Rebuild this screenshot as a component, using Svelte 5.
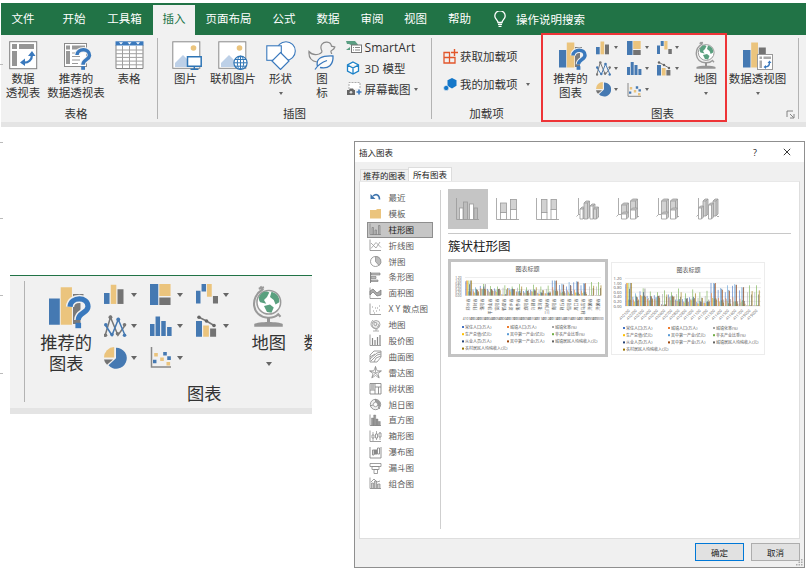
<script>
  const tabs = [
    ['文件', 44], ['开始', 58], ['工具箱', 43], ['插入', 42], ['页面布局', 67],
    ['公式', 44], ['数据', 44], ['审阅', 44], ['视图', 43], ['帮助', 45]
  ];

  const B = '#4579b2', Y = '#ebc47d', G = '#737373', T = '#3a79bd';

  // Ribbon icons: [width, height, markup]
  const icons = {
    pivot: [29, 29, `<rect x=".7" y=".7" width="27" height="27" fill="#fff" stroke="#7f7f7f"/><path d="M3 3h5v5H3zM10 3h15v5H10zM3 10h5v15H3z" fill="#959595"/><path d="M13 21.500c7 1 10-3 10-8" fill="none" stroke="${T}" stroke-width="2.300"/><path d="M19 15l4-5 3.500 5zM16 17.500l-5 4 5 3.500z" fill="${T}"/>`],
    recPivot: [29, 29, `<rect x="1.500" y="2.500" width="22" height="23" fill="#fff" stroke="#8a8a8a"/><path d="M3 4.500h4v4H3zM9 4.500h13v4H9zM3 10h4v13H3z" fill="#999"/><path d="M9 12h8M9 15.500h8M9 19h8M9 22.500h6" stroke="#999"/><path d="M14 14c.3-7 12.800-7 12.500 .5-.4 4.500-6.500 4-6.500 9.500" fill="none" stroke="#f1f1f1" stroke-width="5.500"/><path d="M14 14c.3-7 12.800-7 12.500 .5-.4 4.500-6.500 4-6.500 9.200" fill="none" stroke="${T}" stroke-width="3.500"/><path d="M18.200 25.200h3.800v3.600h-3.800z" fill="${T}"/>`],
    table: [29, 29, `<path d="M1 4v23.500h27V4" fill="#fff" stroke="#858585"/><path d="M1 9h27M1 12.700h27M1 16.400h27M1 20.100h27M1 23.800h27M7.500 5v22M14.500 5v22M21.300 5v22" stroke="#a0a0a0" fill="none"/><path d="M.5 .3h28v4.200H.5z" fill="${T}"/><path d="M4 1.300h4l-2 2.200zM12.500 1.300h4l-2 2.200zM21 1.300h4l-2 2.200z" fill="#fff"/>`],
    picture: [30, 29, `<rect x=".8" y=".8" width="27" height="26.500" fill="#fff" stroke="#8a8a8a"/><circle cx="21.500" cy="7" r="2.800" fill="${Y}"/><path d="M3 26V22l8-8 5 5v7z" fill="#bdd0e7"/><path d="M15.500 15.800h13.700v9.500H15.500z" fill="#fff" stroke="#2f75b5" stroke-width="1.500"/><path d="M22.300 25v3M18.500 28.200h8" stroke="#2f75b5" stroke-width="1.400"/>`],
    online: [30, 29, `<rect x=".8" y=".8" width="27" height="26.500" fill="#fff" stroke="#8a8a8a"/><circle cx="21.500" cy="7" r="2.800" fill="${Y}"/><path d="M3 26V22l8-8 5 5v7z" fill="#bdd0e7"/><circle cx="22.500" cy="21.800" r="6.600" fill="#fff" stroke="#2f75b5" stroke-width="1.200"/><ellipse cx="22.500" cy="21.800" rx="3.200" ry="6.600" fill="none" stroke="#2f75b5"/><path d="M22.500 15.200v13.200M16 21.800h13M17 18.500h11M17 25.200h11" stroke="#2f75b5"/>`],
    shapes: [30, 29, `<circle cx="20" cy="10" r="9.300" fill="#fff" stroke="${T}" stroke-width="1.100"/><rect x=".8" y="4.800" width="14.500" height="14.500" fill="#fff" stroke="${T}" stroke-width="1.100"/><path d="M14.500 11.500l8.500 8.500-8.500 8.500L6 20z" fill="#fff" stroke="${T}" stroke-width="1.200"/>`],
    duck: [28, 29, `<path d="M9 21C3 20 .5 16 1 10.500c2.500 3 6.500 3.500 10 2.500 2.500-.8 3.500-2 2.500-4C11.500 4 15 .8 19 1.200c2.800.3 4.200 2 4.500 4l3.300.800c-.8 3-3 2.700-3.800 4-.3 1.200.5 2 .7 3" fill="none" stroke="#8a8a8a" stroke-width="1.200"/><path d="M9.500 25.500c-2-8 4-11 15.500-10.500.5 8.500-4.500 13.500-13 11.500M7 28.500c3-4.500 6-7 12-9" fill="#fff" fill-opacity=".7" stroke="${T}" stroke-width="1.300"/>`],
    smart: [16, 14, `<path d="M0 1h9l3 3.500L10 7H5V5L3 4H1z" fill="#5a9e82"/><path d="M0 10h4V7z" fill="#5a9e82"/><rect x="5.500" y="5" width="10" height="7.500" fill="#fff" stroke="#777"/><path d="M7 7.500h1M9 7.500h5M7 10h1M9 10h5" stroke="#888"/>`],
    cube: [14, 14, `<path d="M7 1l5.500 3v6L7 13l-5.500-3V4zM1.500 4L7 7l5.500-3M7 7v6" fill="#fff" stroke="#1d82c8" stroke-width="1.300"/>`],
    shot: [17, 14, `<path d="M3 7V.5h11v6" fill="#fff" stroke="#aaa" stroke-dasharray="2 1"/><path d="M1 8h2l1-1.500h3L8 8h1v5H1z" fill="#666"/><circle cx="5" cy="10.300" r="1.300" fill="#ddd"/><path d="M13 7.500v5M10.500 10h5" stroke="${T}" stroke-width="1.600"/>`],
    getAdd: [15, 15, `<path d="M1 3.500h5.500v10.500H1zM1 8.500h11v5.500H1z" fill="none" stroke="#e2562b" stroke-width="1.300"/><path d="M11.500 0v7M8 3.500h7" stroke="#e2562b" stroke-width="1.400"/>`],
    myAdd: [15, 15, `<path d="M9 1l4.500 2.300v5.400L9 11.500 4.500 9V3.300z" fill="#1477c9"/><circle cx="3.200" cy="11" r="2.600" fill="#1477c9" stroke="#f1f1f1" stroke-width=".6"/>`],
    recChart: [28, 29, `<path d="M0 9h7.200v17.500H0z" fill="${B}"/><path d="M7.800 1.500h7.500v25H7.800z" fill="${Y}"/><path d="M16 6h7v2h-7zM16 12h5v14h-5z" fill="#7a7a7a"/><path d="M14 14.500c.5-7 12-7 12 -.2 0 4.500-6.500 4-6.500 9" fill="none" stroke="#f1f1f1" stroke-width="5.500"/><path d="M14 14.500c.5-7 12-7 12 -.2 0 4.500-6.500 4-6.500 9" fill="none" stroke="${T}" stroke-width="3.500"/><path d="M17.600 25.200h3.800v3.600h-3.800z" fill="${T}"/>`],
    col: [14, 14, `<path d="M0 6h3.700v7.300H0z" fill="${B}"/><path d="M4.500 .5h3.700v12.800H4.500z" fill="${Y}"/><path d="M9 3.500h4v9.800H9z" fill="${G}"/>`],
    tree: [14, 14, `<path d="M0 0h5.500v14H0z" fill="${B}"/><path d="M6.200 0h7.500v8H6.200z" fill="${Y}"/><path d="M6.200 9h7.500v5H6.200z" fill="${G}"/>`],
    fall: [15, 14, `<path d="M0 4.500h3V13H0zM3.700 0h3v5h-3z" fill="${B}"/><path d="M7.300 0h3.200v8.500H7.300z" fill="${Y}"/><path d="M11.300 8h3.500v5h-3.500z" fill="${G}"/>`],
    line: [15, 15, `<path d="M.8 13.500L4.300 1.500l5 12 5-7" fill="none" stroke="#777"/><path d="M.8 6.500l4.500 7L9.500 3l4.500 10.500" fill="none" stroke="${B}"/><g fill="#777"><circle cx="1" cy="13.500" r="1.200"/><circle cx="4.300" cy="1.500" r="1.300"/><circle cx="9" cy="12.500" r="1.200"/><circle cx="13.700" cy="6.500" r="1.200"/></g><g fill="${B}"><circle cx="1.200" cy="6.500" r="1.200"/><circle cx="5.300" cy="13" r="1.200"/><circle cx="9.500" cy="3" r="1.300"/><circle cx="13.700" cy="13.500" r="1.200"/></g>`],
    hist: [15, 15, `<path d="M0 6h3v8H0zM3.700 1h3v13h-3zM7.500 4h3v10h-3zM11.400 8h3v6h-3z" fill="${B}"/>`],
    combo: [14, 15, `<path d="M0 4h4v10.500H0z" fill="${B}"/><path d="M4.800 7h3.800v7.500H4.800z" fill="${Y}"/><path d="M9.400 9h4v5.500h-4z" fill="${G}"/><path d="M2 1.500l5 2.500 5 3" stroke="#777" fill="none"/><g fill="#666"><circle cx="2" cy="1.500" r="1.200"/><circle cx="7" cy="4" r="1.200"/><circle cx="12" cy="7" r="1.200"/></g>`],
    pie: [15, 15, `<path d="M8 .5a7 7 0 1 1-5 11.700l5-4.700z" fill="${B}"/><path d="M6.800 0v7H0A7 7 0 0 1 6.800 0z" fill="${Y}"/><path d="M0 8.300h6l-4 3.500A6 6 0 0 1 0 8.300z" fill="${G}"/>`],
    scatter: [14, 14, `<path d="M1 0v13.300h13" fill="none" stroke="#888"/><path d="M2.800 4h2.400v2.400H2.800zM6.800 7h2.400v2.400H6.800zM11 10h2.400v2.400H11z" fill="${Y}"/><path d="M2 8.500h2.300v2.300H2zM8.800 3.300h2.400v2.400H8.800zM11.500 6.200h2.400v2.400h-2.400z" fill="${B}"/>`],
    globe: [22, 29, `<path d="M5.500 1L7 3c-8.500 5-7.500 18 3.500 18.800 3.500.2 5.500-.8 7-2.300l1.500 1.700M4.500 2.500L8 1.500" fill="none" stroke="#9a9a9a" stroke-width="1.400"/><circle cx="11.200" cy="11.500" r="7.900" fill="#fff" stroke="#9a9a9a"/><path d="M6 6c2-2 4-2 5.500-1l-1.500 3L8 10l1.500 2.500-4-1C4 9.500 4.500 7.500 6 6zM13 4.500c3.500 1 5.500 3.500 5.200 7l-2.500 1.500-1.200-3-2.500-2zM8 14l4-1 2.500 2-1.500 3.500-3-.5z" fill="#5aa07f"/><path d="M10 21.500h2v4h-2zM1.500 26c2.500-1.800 16.500-1.800 19 0v1.800h-19z" fill="#959595"/>`],
    pivotChart: [30, 29, `<path d="M0 9h7.500v17.500H0z" fill="${B}"/><path d="M8.200 1.500h6.800v25H8.200z" fill="${Y}"/><path d="M15.800 6.500h7v20h-7z" fill="#737373"/><rect x="14.500" y="13.500" width="15" height="15" fill="#fff" stroke="#999"/><path d="M16.500 15.500h2.500v2.500h-2.500zM20.500 15.500h7.500v2.500h-7.500zM16.500 19.500h2.500v7.500h-2.500z" fill="#aaa"/><path d="M22 26c3 0 4.500-1.500 4.500-4.500" fill="none" stroke="${T}" stroke-width="1.400"/><path d="M24.500 22l2-2.500 2 2.500zM23 24v4l-2.500-2z" fill="${T}"/>`],
    bulb: [12, 17, `<path d="M4 11.500C4 9 .8 8 .8 5A5.200 5.200 0 0 1 11.200 5C11.200 8 8 9 8 11.500zM4 13.300h4M4.500 15.300h3" fill="none" stroke="#fff" stroke-width="1.300"/>`]
  };

  // Monochrome 12px icons of the category list
  const ax = '<path d="M1 .5v11h11" fill="none" stroke="#888" stroke-width=".8"/>';
  const side = [
    ['最近', '<path d="M4 5c3-2.500 6.500-1.500 6.500 3.500" fill="none" stroke="#3f75ae" stroke-width="1.600"/><path d="M1.500 3v5h5z" fill="#3f75ae"/>'],
    ['模板', '<path d="M1 3h6l1-1h4v9.500H1z" fill="#ebc47d"/>'],
    ['柱形图', ax + '<path d="M3 4.500h1.500v7H3zM6 7h1.500v4.500H6zM9.500 2.500H11v9H9.500z" fill="#bbb" stroke="#777" stroke-width=".6"/>'],
    ['折线图', ax + '<path d="M2 9.500l5-6 5 5M2 4l5 5 4-6" fill="none" stroke="#999" stroke-width=".8"/>'],
    ['饼图', '<circle cx="6.500" cy="6.500" r="5" fill="#fff" stroke="#888" stroke-width=".8"/><path d="M6.500 1.500v5l3.500 4a5 5 0 0 0-3.500-9z" fill="#bbb" stroke="#888" stroke-width=".7"/>'],
    ['条形图', '<path d="M1.500 1v11" fill="none" stroke="#888"/><path d="M2 2h9v2H2zM2 5.500h5v2H2zM2 9h7v1.500H2z" fill="#bbb" stroke="#777" stroke-width=".6"/>'],
    ['面积图', ax + '<path d="M1 4l3-2 4 4 4-3v5L8 9 4 5 1 8z" fill="#aaa" stroke="#777" stroke-width=".7"/>'],
    ['X Y 散点图', ax + '<path d="M3 4h1M6 5h1M10 3h1M4 8h1M7 8h1M10 7h1M8 5h1M5 10h1" stroke="#999"/>'],
    ['地图', '<circle cx="7" cy="5.500" r="4" fill="#eee" stroke="#999" stroke-width=".8"/><path d="M4 1C0 5 2 10 9 10M4 12h6M7 10v2M5 3l3 1-1 3-2-1zM9 5l1 2-2 1" fill="none" stroke="#999" stroke-width=".8"/>'],
    ['股价图', ax + '<path d="M3.500 4v7M6 6v5M8.500 3v8M11 1v10" stroke="#888" stroke-width="1.200"/>'],
    ['曲面图', '<path d="M1 5l4-4h7v6l-4 5H1zM1 9l7-6 4-1M2 11l6-6 4-1M5 12l2-4 5-2M1 7l5-3" fill="none" stroke="#888" stroke-width=".8"/>'],
    ['雷达图', '<path d="M6.500 .5l1.600 4.200 4.400.2L9 7.600l1.200 4.400-3.700-2.500L2.800 12 4 7.600.5 4.900l4.400-.2zM6.500 .5v6M1 5l5.500 2L12 5M3 11l3.500-4 3.500 4" fill="none" stroke="#888" stroke-width=".7"/>'],
    ['树状图', '<path d="M1 1.500h11v10.500H1zM6 1.500V12M6 5h6M9.500 5v7M1 8h5" fill="#fff" stroke="#888" stroke-width=".9"/><path d="M1.500 2h4v6h-4z" fill="#bbb"/>'],
    ['旭日图', '<circle cx="6.500" cy="6.500" r="5.200" fill="#eee" stroke="#888" stroke-width=".8"/><path d="M6.500 1.500a5 5 0 0 1 4 8l-2.500-2z" fill="#999"/><circle cx="6.500" cy="6.500" r="2.200" fill="#fff" stroke="#888" stroke-width=".7"/><path d="M6.500 1v3M1 8l3-1M9 9l2 2" stroke="#888" stroke-width=".8"/>'],
    ['直方图', ax + '<path d="M2.500 4h2v7.500h-2zM4.700 1h2v10.500h-2zM7 5h2v6.500H7zM9.300 7.500h2v4h-2z" fill="#999" stroke="#777" stroke-width=".4"/>'],
    ['箱形图', ax + '<path d="M4 2v9M7.500 1v9M11 2v8" stroke="#888" stroke-width=".7"/><path d="M3 5h2v3H3zM6.500 4h2v4h-2zM10 3h2v4h-2z" fill="#fff" stroke="#888" stroke-width=".8"/>'],
    ['瀑布图', '<path d="M1 1v11h11V1M3.500 4h1.500v5H3.500zM8.500 2h2v6h-2z" fill="#fff" stroke="#888" stroke-width=".9"/><path d="M5 3.500h3v5H5z" fill="#888"/>'],
    ['漏斗图', '<path d="M1 1.500h11v3H1zM3 4.500h7v3H3zM5 7.500h3.500v4H5z" fill="#fff" stroke="#888" stroke-width=".8"/>'],
    ['组合图', ax + '<path d="M2.500 6h2v5.500h-2zM5.500 4h2v7.500h-2zM8.500 7h2.500v4.500H8.500z" fill="#ccc" stroke="#888" stroke-width=".7"/><path d="M2 5l3-3 3 3 3-1" fill="none" stroke="#888" stroke-width=".8"/>']
  ];

  // Column chart sub-types, 24x24
  const bx = (x, y, w, h, f) => `<rect x="${x}" y="${y}" width="${w}" height="${h}" fill="${f}"/>`;
  const bar3 = (x, y, w, h, f) => `<path d="M${x} ${y}l2-2h${w}v${h}l-2 2" fill="#c9c9c9"/><path d="M${x} ${y}h${w}v${h}h-${w}zM${x + w} ${y}l2-2" fill="${f}"/>`;
  const axis = '<path d="M.5 1v21.500H23" fill="none"/>';
  const axis3 = '<path d="M2.500 1v16.500l-2 2M2.500 17.500H5M21 19.500h2" fill="none"/>';
  const d = '#d2d2d2', w = '#fff';
  const types = [
    axis + bx(3.5, 11, 3.5, 11.5, w) + bx(7.500, 5, 4, 17.5, '#bcbcbc') + bx(13.500, 7, 4, 15.5, w) + bx(18, 11, 3.500, 11.5, '#bcbcbc'),
    axis + bx(4.500, 6, 6, 9.500, d) + bx(4.500, 15.500, 6, 7, w) + bx(14.500, 2.500, 6, 10, d) + bx(14.500, 12.500, 6, 10, w),
    axis + bx(5.500, 2.500, 5.500, 13, d) + bx(5.500, 15.500, 5.500, 7, w) + bx(15, 2.500, 5.500, 10, d) + bx(15, 12.500, 5.500, 10, w),
    axis3 + bar3(4, 12, 3, 10, w) + bar3(8, 6, 3.500, 16, d) + bar3(14, 9, 3, 13, w) + bar3(17.500, 12, 3, 10, d),
    axis3 + bar3(5.500, 8, 5, 9, d) + bar3(5.500, 17, 5, 5, w) + bar3(14.500, 4, 5, 9, d) + bar3(14.500, 13, 5, 9, w),
    axis3 + bar3(5.500, 4, 5, 13, d) + bar3(5.500, 17, 5, 5, w) + bar3(14.500, 4, 5, 9, d) + bar3(14.500, 13, 5, 9, w),
    axis3 + bar3(7, 4, 3, 15, d) + bar3(2.500, 11, 3, 11, w) + bar3(17, 4, 3, 15, d) + bar3(12.500, 8, 3, 14, w)
  ];

  const legend = [
    ['常住人口(万人)', '#4472c4'], ['城镇人口(万人)', '#ed7d31'], ['城镇化率(%)', '#a5a5a5'],
    ['生产总值(亿元)', '#ffc000'], ['其中第一产业(亿元)', '#5b9bd5'], ['非农产业比重(%)', '#70ad47'],
    ['从业人员(万人)', '#264478'], ['其中第一产业(万人)', '#9e480e'], ['城镇居民人均纯收入(元)', '#636363'],
    ['农村居民人均纯收入(元)', '#997300']
  ];
  const cities = ['郑州市', '开封市', '洛阳市', '平顶山市', '安阳市', '鹤壁市', '新乡市', '焦作市', '濮阳市', '许昌市', '漯河市', '三门峡市', '南阳市', '商丘市', '信阳市', '周口市', '驻马店市', '济源市', '济源市'];
  const codes = cities.map((_, i) => (i < 17 ? 410100 + i * 100 : 419000));
  const data = [
    [.95, 1, .98, 1, .28, 1, .75, .27, 1, 1],
    [.4, .28, .2, .18, .55, .45, .4, .38, .22, .28],
    [.64, .48, .42, .45, .42, .77, .6, .45, .76, .4],
    [.44, .3, .35, .22, .25, .63, .43, .42, .35, .3],
    [.47, .3, .38, .24, .38, .6, .43, .44, .45, .35],
    [.08, .06, .52, .05, .05, .68, .08, .06, .4, .5],
    [.5, .36, .4, .25, .42, .6, .46, .42, .4, .42],
    [.28, .22, .52, .22, .28, .76, .3, .18, .4, .6],
    [.3, .18, .2, .15, .35, .55, .33, .3, .35, .18],
    [.38, .28, .32, .25, .33, .72, .4, .3, .35, .55],
    [.18, .12, .35, .1, .22, .6, .2, .17, .36, .35],
    [.15, .14, .44, .12, .18, .66, .2, .18, .28, .2],
    [1, .56, .35, .35, 1, .32, .98, 1, .34, .28],
    [.7, .35, .2, .18, .78, .25, .75, .7, .28, .15],
    [.6, .35, .3, .22, .9, .12, .7, .65, .3, .1],
    [.88, .38, .18, .2, .95, .2, .92, .92, .2, .1],
    [.68, .32, .15, .18, .82, .25, .8, .82, .22, .1],
    [.02, .02, .6, .02, .02, .9, .02, .02, .5, .65],
    [.02, .02, .6, .02, .02, .9, .02, .02, .5, .68]
  ];
</script>

{#snippet icon(name)}
  <svg class="icon" width={icons[name][0]} height={icons[name][1]} viewBox="0 0 {icons[name][0]} {icons[name][1]}">{@html icons[name][2]}</svg>
{/snippet}

{#snippet big(name, width, lines, arrow)}
  <div class="big {name}" style:width="{width}px">
    <div class="pic">{@render icon(name)}</div>
    {#each lines as l}<span>{l}</span>{/each}
    {#if arrow}<i class="arrow"></i>{/if}
  </div>
{/snippet}

{#snippet chartGroup()}
  <section class="group charts">
    <div class="commands">
      {@render big('recChart', 51, ['推荐的', '图表'], false)}
      <div class="gallery">
        {#each ['col', 'tree', 'fall', 'line', 'hist', 'combo', 'pie', 'scatter'] as n}
          <div class="mini"><div class="cell">{@render icon(n)}</div><i class="arrow"></i></div>
        {/each}
      </div>
      {@render big('globe', 36, ['地图'], true)}
      {@render big('pivotChart', 68, ['数据透视图'], true)}
    </div>
    <footer>
      <span>图表</span>
      <svg class="launch" width="9" height="9" viewBox="0 0 9 9"><path d="M1 7V1h6M4 4l3.500 3.500M8 4v4H4" fill="none" stroke="#777" stroke-width=".9" /></svg>
    </footer>
  </section>
{/snippet}

{#snippet preview(vertical)}
  {@const x0 = vertical ? 14 : 13}
  {@const base = vertical ? 33.5 : 43}
  {@const top = vertical ? 18.5 : 20}
  {@const step = vertical ? 7.2 : 7.1}
  <svg width="153" height="92" viewBox="0 0 153 92">
    <text x="76.500" y="8.500" font-size="6" text-anchor="middle" fill="#555">图表标题</text>
    {#each [0, 1, 2, 3, 4, 5, 6] as t}
      {@const y = base - t * (base - top) / 5}
      {#if !vertical || t % 2 === 0}<path d="M{x0} {y}h136" stroke="#ddd" stroke-width=".5" />{/if}
      <text x={x0 - 3.5} y={y + 1.5} font-size={vertical ? 3.2 : 4} text-anchor="end" fill="#555">{(t * .2).toFixed(2)}</text>
    {/each}
    {#each data as row, i}
      {#each row as v, j}
        <rect x={x0 + .5 + i * step + j * .62} y={base - v * (base - top)} width=".6" height={v * (base - top)} fill={legend[j][1]} />
      {/each}
      {#if vertical}
        <text transform="translate({x0 + 5 + i * step} {36.5 + cities[i].length * 4}) rotate(-90)" font-size="4" fill="#555">{cities[i]}</text>
        <text x={x0 + 3.5 + i * step} y="57.500" font-size="3.300" text-anchor="middle" fill="#444">{codes[i]}</text>
      {:else}
        <text transform="translate({x0 + 5 + i * step} 48) rotate(-45)" font-size="3.800" text-anchor="end" fill="#555">{codes[i]}</text>
      {/if}
    {/each}
    {#each legend as [name, color], i}
      <rect x={11 + (i % 3) * 45} y={64 + Math.floor(i / 3) * 7.2} width="2" height="2" fill={color} />
      <text x={14 + (i % 3) * 45} y={66.700 + Math.floor(i / 3) * 7.2} font-size="4" fill="#555">{name}</text>
    {/each}
  </svg>
{/snippet}

<div class="screen">
  <div class="ribbon">
    <nav>
      {#each tabs as [name, width]}
        <span class="tab" class:active={name === '插入'} class:toolbox={name === '工具箱'} style:width="{width}px">{name}</span>
      {/each}
      <span class="tell">{@render icon('bulb')}操作说明搜索</span>
    </nav>
    <div class="groups">
      <section class="group tables">
        <div class="commands">
          {@render big('pivot', 44, ['数据', '透视表'], false)}
          {@render big('recPivot', 62, ['推荐的', '数据透视表'], false)}
          {@render big('table', 44, ['表格'], false)}
        </div>
        <footer>表格</footer>
      </section>
      <section class="group illus">
        <div class="commands">
          {@render big('picture', 47, ['图片'], false)}
          {@render big('online', 48, ['联机图片'], false)}
          {@render big('shapes', 47, ['形状'], true)}
          {@render big('duck', 36, ['图', '标'], false)}
          <div class="stack">
            <div class="row"><span class="slot">{@render icon('smart')}</span><span class="latin">SmartArt</span></div>
            <div class="row"><span class="slot">{@render icon('cube')}</span>3D 模型</div>
            <div class="row"><span class="slot">{@render icon('shot')}</span>屏幕截图<i class="arrow"></i></div>
          </div>
        </div>
        <footer>插图</footer>
      </section>
      <section class="group addins">
        <div class="commands">
          <div class="stack">
            <div class="row">{@render icon('getAdd')}获取加载项</div>
            <div class="row">{@render icon('myAdd')}我的加载项<i class="arrow far"></i></div>
          </div>
        </div>
        <footer>加载项</footer>
      </section>
      {@render chartGroup()}
    </div>
  </div>
  <div class="highlight"></div>

  {#each [64, 142, 218, 295, 373] as y}<i class="tick" style:top="{y}px"></i>{/each}

  <div class="magnified"><div class="lens">{@render chartGroup()}</div></div>

  <div class="dialog">
    <header>
      <span>插入图表</span>
      <b>?</b>
      <svg width="8" height="8" viewBox="0 0 8 8"><path d="M.8 .8l6.400 6.400M7.200 .8L.8 7.200" stroke="#222" stroke-width=".9" /></svg>
    </header>
    <div class="dtabs"><span>推荐的图表</span><span class="on">所有图表</span></div>
    <main>
      <ul>
        {#each side as [name, markup]}
          <li class:sel={name === '柱形图'}><svg width="13" height="13" viewBox="0 0 13 13">{@html markup}</svg>{name}</li>
        {/each}
      </ul>
      <div class="detail">
        <div class="types">
          {#each types as t, i}
            <div class="type" class:sel={i === 0}><svg width="24" height="24" viewBox="0 0 24 24" stroke="#999" stroke-width=".8">{@html t}</svg></div>
          {/each}
        </div>
        <h2>簇状柱形图</h2>
        <div class="previews">
          <div class="card sel">{@render preview(true)}</div>
          <div class="card">{@render preview(false)}</div>
        </div>
      </div>
    </main>
    <div class="actions"><button class="ok">确定</button><button>取消</button></div>
    <svg class="grip" width="7" height="7" viewBox="0 0 7 7"><path d="M5 0h1.500v1.500H5zM5 2.500h1.500V4H5zM5 5h1.500v1.500H5zM2.500 2.500H4V4H2.500zM2.500 5H4v1.500H2.500zM0 5h1.500v1.500H0z" fill="#aaa" /></svg>
  </div>
</div>

<style>
  :global(body) { background: #fff; }
  .screen {
    position: relative; width: 806px; height: 572px; overflow: hidden; background: #fff;
    font-family: "Open Sans", "Noto Sans CJK SC", sans-serif; font-size: 11.5px; color: #333;
  }
  .screen * { box-sizing: border-box; }
  svg { display: block; flex: none; }
  .ribbon { padding: 3px 0 0 1px; }
  nav { display: flex; align-items: flex-end; height: 32px; background: #217346; color: #fff; }
  .tab { height: 30px; line-height: 28px; text-align: center; white-space: nowrap; flex: none; }
  .tab.toolbox { margin-right: 7px; }
  .tab.active { background: #f1f1f1; color: #217346; }
  .tell { display: flex; align-items: center; gap: 10px; height: 32px; margin-left: 12px; white-space: nowrap; }
  .groups { display: flex; height: 92px; background: #f1f1f1; border-bottom: 5px solid #e4e4e4; }
  .group { flex: none; height: 81px; margin-top: 3px; border-right: 1px solid #b3b3b3; }
  .tables { width: 157px; }
  .illus { width: 274px; }
  .illus .commands { padding-left: 4px; }
  .addins { width: 110px; border-color: transparent; }
  .charts { width: 257px; border-left: 1px solid #b3b3b3; }
  .charts .commands { padding-left: 2px; }
  .commands { display: flex; height: 68px; }
  .group footer { display: flex; justify-content: center; height: 15px; line-height: 15px; }
  .tables footer { padding-right: 6px; }
  .charts footer { justify-content: flex-start; }
  .charts footer span { width: 239px; text-align: center; }
  .launch { margin: 4px 0 0 4px; }
  .big { display: flex; flex-direction: column; align-items: center; flex: none; padding-top: 3px; line-height: 14.300px; white-space: nowrap; }
  .pic { height: 31px; }
  .recChart .pic { padding-left: 5px; }
  .recPivot .pic { padding-left: 3px; }
  .picture .pic { padding-left: 2px; }
  .arrow { flex: none; width: 0; height: 0; border: 2.500px solid transparent; border-top: 3px solid #666; border-bottom: 0; }
  .big .arrow { margin-top: 6px; }
  .gallery { display: grid; grid-template-columns: repeat(3, 30.500px); grid-template-rows: repeat(3, 21px); align-content: start; margin-top: -1px; }
  .mini { display: flex; align-items: center; }
  .cell { width: 17px; }
  .mini .arrow { margin-left: 1px; }
  .stack { display: flex; flex-direction: column; }
  .illus .stack { padding-left: 6px; margin-top: -1.500px; }
  .illus .row { height: 21px; }
  .slot { width: 18.500px; flex: none; }
  .latin { font-size: 12.100px; }
  .row { display: flex; align-items: center; white-space: nowrap; }
  .row .arrow { margin-left: 3px; }
  .addins .stack { padding: 4px 0 0 11px; }
  .addins .row { height: 28px; gap: 2px; }
  .addins .arrow.far { margin-left: 6px; }
  .highlight { position: absolute; left: 541px; top: 33px; width: 186px; height: 89px; border: 2px solid #ee3437; }
  .tick { position: absolute; left: 0; width: 3px; height: 1px; background: #bbb; }

  .magnified { position: absolute; left: 10px; top: 275px; width: 302px; height: 139px; overflow: hidden; background: #f1f1f1; border-top: 1px solid #217346; border-bottom: 6px solid #e4e4e4; }
  .lens { zoom: 1.5; width: 300px; padding-left: 9.300px; }
  .lens .group { margin-top: 3px; }

  .dialog { position: absolute; left: 354px; top: 141px; width: 451px; height: 427px; display: flex; flex-direction: column; background: #f0f0f0; border: 1px solid #8f8f8f; font-size: 8.500px; color: #222; padding-bottom: 6px; }
  .dialog header { display: flex; align-items: center; height: 20px; background: #fff; padding: 0 13px 0 4px; }
  .dialog header span { flex: 1; }
  .dialog header b { font-weight: 400; font-size: 9px; margin-right: 26px; }
  .dtabs { display: flex; align-items: flex-end; height: 19px; padding-left: 5px; white-space: nowrap; }
  .dtabs span { height: 12px; line-height: 12px; width: 48px; padding-left: 2px; border-top: 1px solid #ddd; border-left: 1px solid #ddd; }
  .dtabs .on { height: 14px; line-height: 14px; width: 44px; padding-left: 4px; background: #fff; border-right: 1px solid #ddd; }
  main { display: flex; height: 358px; flex: none; margin: 0 4px 0 4px; background: #fff; border: 1px solid #dedede; border-top-color: #e8e8e8; }
  ul { list-style: none; margin: 8px 0 9px; padding: 0 7px 0 7px; width: 81px; border-right: 1px solid #cfcfcf; color: #5c5c5c; }
  li { display: flex; align-items: center; gap: 6.500px; width: 66px; height: 15.900px; padding-left: 1px; border: 1px solid transparent; white-space: nowrap; line-height: 12px; }
  li.sel { background: #c6c6c6; border-color: #8e8e8e; color: #222; }
  .detail { padding: 7px 0 0 7px; width: 351px; }
  .types { display: flex; height: 45px; width: 343px; border-bottom: 1px solid #c8c8c8; }
  .type { display: flex; align-items: center; justify-content: center; width: 40px; height: 40px; }
  .type.sel { background: #c5c5c5; }
  h2 { margin: 0; height: 25px; line-height: 26px; font-size: 12.500px; font-weight: 400; color: #222; }
  .previews { display: flex; align-items: center; gap: 3px; }
  .card { width: 154px; height: 93px; border: 1px solid #ececec; }
  .card.sel { width: 160px; height: 98px; border: 3px solid #c3c3c3; }
  .actions { display: flex; justify-content: flex-end; gap: 7px; margin-top: 4px; padding-right: 4px; }
  button { width: 49px; height: 18px; padding: 0; font: inherit; color: #222; background: #e1e1e1; border: 1px solid #adadad; }
  button.ok { border: 1.500px solid #0078d7; }
  .grip { position: absolute; right: 1px; bottom: 1px; }
</style>
